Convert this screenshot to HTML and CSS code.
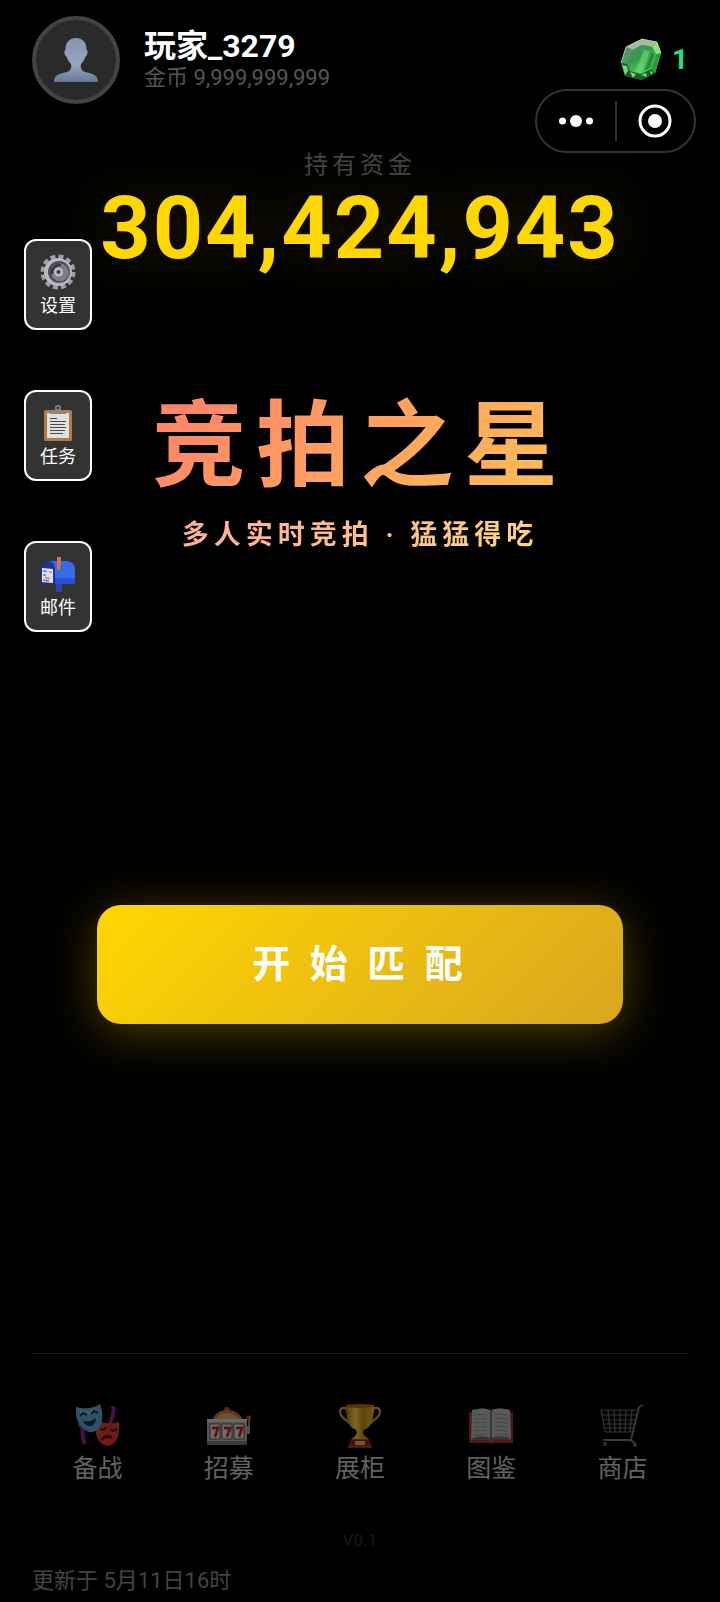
FILE: index.html
```html
<!DOCTYPE html>
<html lang="zh-CN">
<head>
<meta charset="utf-8">
<meta name="viewport" content="width=device-width, initial-scale=1">
<title>竞拍之星</title>
<link rel="stylesheet" href="styles.css">
</head>
<body>
<div class="page">
  <header class="header">
    <div class="avatar">
      <svg class="avatar-icon" viewBox="0 0 44 44" aria-hidden="true">
        <defs><linearGradient id="bust" x1="0" y1="0" x2="0" y2="1"><stop offset="0" stop-color="#8796ae"/><stop offset=".6" stop-color="#97a5bd"/><stop offset="1" stop-color="#66779a"/></linearGradient></defs>
        <path fill="url(#bust)" d="M22 0c-7 0-11 5-10.500 12-1.800.3-1.300 5.500 1 6.500 1 3.500 2.500 5.500 4.500 7.500 1 5-1 7.500-6 8.500C4 36 0 37.500 0 44h44c0-6.500-4-8-11-9.500-5-1-7-3.500-6-8.500 2-2 3.500-4 4.500-7.500 2.300-1 2.800-6.200 1-6.500C33 5 29 0 22 0z"/>
      </svg>
    </div>
    <div class="player">
      <h2 class="player-name">玩家_3279</h2>
      <p class="player-coins">金币 9,999,999,999</p>
    </div>
    <div class="gems">
      <svg class="gem-icon" viewBox="0 0 44 44" aria-hidden="true">
        <defs><linearGradient id="gem" x1="0" y1="0" x2=".6" y2="1"><stop offset="0" stop-color="#6f7f78"/><stop offset=".45" stop-color="#2f9c4c"/><stop offset="1" stop-color="#4fd45a"/></linearGradient></defs>
        <path fill="#238a3a" d="M6 9 22 1l15 3 4 11-6 20-13 7-17-4-4-13z"/>
        <path fill="#a3bd9c" d="M6 9 22 1l15 3-5 5-10-2-9 5z"/>
        <path fill="#4f9a5e" d="m6 9 7 3-6 14-6-1z"/>
        <path fill="#8fe27c" d="m37 4 4 11-6 20-4-4 5-15-4-7z"/>
        <path fill="#2f9a3c" d="m41 15-5 1-5 15 4 4z"/>
        <path fill="#125f27" d="m7 26 3 7 11 3 10-5 4 4-13 7-17-4-4-13z"/>
        <path fill="url(#gem)" d="m13 12 9-5 10 2 4 7-5 15-10 5-11-3-3-7z"/>
        <path fill="#7ddf85" d="m24 12 6 1-9 22-6-1z" opacity=".5"/>
        <path fill="#12682a" d="m32 14 2 4-4 12-6 3z" opacity=".6"/>
        <path fill="#9ff093" d="m2 27 5 1 1 5-3 4zm8 7 6 2-3 4zm11 3 5-2 1 4zm9-4 3 1-2 3z" opacity=".8"/>
        <path fill="none" stroke="#d7dcc9" d="M6 9 22 1l15 3 4 11M6 9 1 25" opacity=".7"/>
      </svg>
      <span class="gem-count">1</span>
    </div>
  </header>

  <div class="capsule">
    <button class="capsule-btn" type="button" aria-label="更多">
      <svg width="34" height="12" viewBox="0 0 34 12"><circle cx="3.500" cy="6" r="3.500"/><circle cx="17" cy="6" r="6"/><circle cx="30.500" cy="6" r="3.500"/></svg>
    </button>
    <span class="capsule-line"></span>
    <button class="capsule-btn" type="button" aria-label="关闭">
      <svg width="34" height="34" viewBox="0 0 34 34"><circle class="ring" cx="17" cy="17" r="15"/><circle cx="17" cy="17" r="7"/></svg>
    </button>
  </div>

  <aside class="side">
    <button class="side-btn" type="button">
      <svg class="side-icon" viewBox="0 0 36 36" aria-hidden="true">
        <circle cx="18" cy="18" r="15" fill="none" stroke="#a09fa7" stroke-width="5" stroke-dasharray="4.800 3.054"/>
        <circle cx="18" cy="18" r="14" fill="#b9b8bf"/>
        <circle cx="19" cy="18" r="11" fill="#4b4c56"/>
        <circle cx="20" cy="18.500" r="9" fill="#7b7d89"/>
        <path d="M12 20a8 8 0 0 1 9-9" fill="none" stroke="#353640" stroke-width="2.500"/>
        <circle cx="18.500" cy="18" r="4.500" fill="#bcbcc5"/>
        <circle cx="18.500" cy="18" r="2" fill="#393a44"/>
      </svg>
      <span>设置</span>
    </button>
    <button class="side-btn" type="button">
      <svg class="side-icon" viewBox="0 0 36 36" aria-hidden="true">
        <rect x="4" y="5" width="28" height="31" rx="1.500" fill="#b47a48"/>
        <path fill="#e2e0df" d="M7 8h22v25H7z"/>
        <circle cx="18" cy="3" r="2.200" fill="none" stroke="#8c8c8c" stroke-width="1.500"/>
        <path fill="#8a8783" d="M14 5h8l4 2v2H10V7z"/>
        <path stroke="#4b4b50" stroke-width="1.200" d="M10 13.500h7M10 16.500h16M10 19.500h15M10 22.500h16M10 25.500h15M10 28.500h13"/>
      </svg>
      <span>任务</span>
    </button>
    <button class="side-btn" type="button">
      <svg class="side-icon" viewBox="0 0 36 36" aria-hidden="true">
        <path fill="#2745b5" d="M16 26h6v10h-6z"/>
        <path fill="#376be8" d="M9 5h18c5 0 8 4 8 9v12c0 1-1 2-2 2H14z"/>
        <path fill="#294fd0" d="M14 22h21v4c0 1-1 2-2 2H14z"/>
        <path fill="#1c358f" d="M1 27V13c0-5 3-8 7-8s7 3 7 8v15z"/>
        <path fill="#dde1f3" d="m2 12 11 1v14L2 26z"/>
        <path stroke="#5a76d8" stroke-width="1.500" d="m3 15 4 .5M3 19l3 .5M3 24l6 1"/>
        <path stroke="#e88a6c" stroke-width="2" d="m9 16 3 .5M5 21.500l5 1"/>
        <path fill="#d8704f" d="M17 1h4v3l-1 10h-3z"/>
      </svg>
      <span>邮件</span>
    </button>
  </aside>

  <section class="funds">
    <p class="funds-label">持有资金</p>
    <p class="funds-amount">304,424,943</p>
  </section>

  <section class="brand">
    <h1 class="brand-title">竞拍之星</h1>
    <p class="brand-sub">多人实时竞拍 · 猛猛得吃</p>
  </section>

  <main class="action">
    <button class="start" type="button">开 始 匹 配</button>
  </main>

  <nav class="nav">
    <button class="nav-item" type="button">
      <svg class="nav-icon" viewBox="0 0 44 44" aria-hidden="true">
        <path d="M37 2c2 7-1 12-3 17M2 20c8 2 2 10 7 20" fill="none" stroke="#8a2490" stroke-width="4"/>
        <path fill="#d83b30" d="M20 16c9 4 15 4 23 2 1 8 0 15-4 20-5 6-12 4-16-1-4-6-4-13-3-21z"/>
        <path fill="#5fa0cc" d="M0 3c8 2 16 2 24-3 3 8 3 17 0 23-3 5-10 7-15 3C1 20-1 12 0 3z"/>
        <path fill="#9cc7df" d="M3 6c6 1 12 1 17-2-3 6-8 8-15 8z" opacity=".5"/>
        <path d="m4 12 3-3 4 2m4-1 3-3 4 2" fill="none" stroke="#12384f" stroke-width="2"/>
        <path fill="#122c40" d="M7 17c5 1 9 0 13-3 0 9-10 11-13 3z"/>
        <path d="m24 25 4 1 2-3m5 2 2 2 4-2" fill="none" stroke="#5a0d10" stroke-width="2"/>
        <path fill="#4c0a0e" d="M25 37c1-7 9-9 12-2-4-2-8-1-12 2z"/>
      </svg>
      <span>备战</span>
    </button>
    <button class="nav-item" type="button">
      <svg class="nav-icon" viewBox="0 0 44 44" aria-hidden="true">
        <circle cx="20" cy="6" r="3" fill="#c83e2e"/>
        <path fill="#bd6f3a" d="M5 16C8 9 13 6 20 6s13 3 16 10z"/>
        <path fill="#dfa057" d="M9 15c3-5 6-6 11-6s8 1 11 6z"/>
        <path fill="#a9a9a9" d="M0 15h40v26H0z"/><path fill="#d0d0d0" d="M0 15h40v3H0z"/><path fill="#777" d="M0 37h40v4H0z"/>
        <path fill="#dcdcdc" stroke="#555" d="M3 20h10v15H3zm12 0h10v15H15zm12 0h10v15H27z"/>
        <path d="M5 24h6l-3 9m9-9h6l-3 9m9-9h6l-3 9" fill="none" stroke="#c4221d" stroke-width="2.800"/>
        <path fill="#999" d="M40 22h3v8h-3z"/><path stroke="#aaa" stroke-width="1.500" d="M42 24V14"/><circle cx="42" cy="14" r="2.500" fill="#d2372e"/>
      </svg>
      <span>招募</span>
    </button>
    <button class="nav-item" type="button">
      <svg class="nav-icon" viewBox="0 0 44 44" aria-hidden="true">
        <defs><linearGradient id="cup"><stop offset="0" stop-color="#ae770d"/><stop offset=".35" stop-color="#f5c957"/><stop offset=".6" stop-color="#bf8613"/><stop offset="1" stop-color="#e5ae35"/></linearGradient></defs>
        <path d="M10 8C8 2 2 3 2 8c0 7 10 8 13 16M34 8c2-6 8-5 8 0 0 7-10 8-13 16" fill="none" stroke="#cf9a34" stroke-width="2.200"/>
        <path fill="url(#cup)" d="M8 1h28c0 13-2 21-10 25-2 3 0 6 5 9H13c5-3 7-6 5-9C10 22 8 14 8 1z"/>
        <ellipse cx="22" cy="2" rx="14" ry="2" fill="#a56d0c"/>
        <path fill="#961f20" d="M13 35h18l3 8H10z"/><path fill="#e3b655" d="M17 37h10v4H17z"/><path stroke="#c08b24" d="M10 43h24M14 35h16"/>
      </svg>
      <span>展柜</span>
    </button>
    <button class="nav-item" type="button">
      <svg class="nav-icon" viewBox="0 0 44 44" aria-hidden="true">
        <path fill="#a72b2c" d="M0 8h44v31H25l-3 1-3-1H0z"/>
        <path fill="#b0b2b2" d="M3 6c8-2 14-2 18 0v28c-6-2-12-2-19 1zm38 0c-8-2-14-2-18 0v28c6-2 12-2 19 1z"/>
        <path fill="#6b6d6e" d="M21 6h2v31h-2zM2 35c7-3 13-3 19 0v2c-6-2-12-2-19 0zm40 0c-7-3-13-3-19 0v2c6-2 12-2 19 0z"/>
        <path d="M5 11l13-1M5 15l13-1M5 19l13-1M5 23l13-1M5 27l13-1M4 31l14-1M26 10l13 1M26 14l13 1M26 18l13 1M26 22l13 1M26 26l13 1M26 30l14 1" stroke="#898b8c"/>
      </svg>
      <span>图鉴</span>
    </button>
    <button class="nav-item" type="button">
      <svg class="nav-icon" viewBox="0 0 44 44" aria-hidden="true">
        <path d="M1 6h37M2 11h34M3 16h32M3 20h31M4 24h29M5 28h27M1 6l4 22M8 6l2 22M14 6l1 22M20 6v22M26 6l-1 22M32 6l-2 22" fill="none" stroke="#6c6c6c" stroke-width="1.200"/>
        <path d="M43 1l-4 2-8 33H3M31 36l4 4" fill="none" stroke="#787878" stroke-width="1.800"/>
        <circle cx="5" cy="40" r="2" fill="#666"/><circle cx="35" cy="41" r="2" fill="#666"/>
      </svg>
      <span>商店</span>
    </button>
  </nav>

  <footer class="footer">
    <p class="version">V0.1</p>
    <p class="updated">更新于 5月11日16时</p>
  </footer>
</div>
</body>
</html>
```
FILE: styles.css
```css
* { box-sizing: border-box; }

body {
  margin: 0;
  background: #000;
  color: #fff;
  font-family: Roboto, "Noto Sans CJK SC", sans-serif;
}

h1, h2, p { margin: 0; }

button {
  margin: 0;
  padding: 0;
  border: 0;
  background: none;
  color: inherit;
  font: inherit;
  cursor: pointer;
}

svg { display: block; }

.page {
  position: relative;
  display: flex;
  flex-direction: column;
  min-height: 100vh;
}

.header {
  display: flex;
  align-items: center;
  padding: 16px 32px 0;
}

.avatar {
  display: flex;
  align-items: center;
  justify-content: center;
  width: 88px;
  height: 88px;
  border: 4px solid #444;
  border-radius: 50%;
  background: #2a2a2a;
}

.avatar-icon { width: 44px; height: 44px; }

.player {
  flex: 1;
  margin-left: 24px;
}

.player-name {
  font-size: 32px;
  line-height: 36px;
  font-weight: 700;
}

.player-coins {
  color: #555;
  font-size: 22px;
  line-height: 28px;
}

.gems {
  display: flex;
  align-items: center;
  gap: 8px;
}

.gem-icon { width: 44px; height: 44px; }

.gem-count {
  color: #1ee283;
  font-size: 28px;
  line-height: 32px;
  font-weight: 700;
}

.capsule {
  position: absolute;
  top: 89px;
  right: 24px;
  display: flex;
  align-items: center;
  width: 161px;
  height: 64px;
  border: 2px solid #333;
  border-radius: 32px;
}

.capsule-btn {
  display: flex;
  flex: 1;
  align-items: center;
  justify-content: center;
  height: 100%;
  fill: #fff;
}

.capsule-line {
  width: 2px;
  height: 40px;
  background: #333;
}

.ring {
  fill: none;
  stroke: #fff;
  stroke-width: 3;
}

.side {
  position: absolute;
  top: 239px;
  left: 24px;
  display: flex;
  flex-direction: column;
  gap: 60px;
}

.side-btn {
  display: flex;
  flex-direction: column;
  align-items: center;
  gap: 2px;
  width: 68px;
  height: 91px;
  padding-top: 13px;
  border: 2px solid #fff;
  border-radius: 12px;
  background: #333;
  font-size: 18px;
  line-height: 28px;
}

.side-icon { width: 36px; height: 36px; }

.funds {
  margin-top: 47px;
  text-align: center;
}

.funds-label {
  color: #444;
  font-size: 24px;
  line-height: 28px;
  letter-spacing: 4px;
}

.funds-amount {
  color: #ffd700;
  font-size: 88px;
  line-height: 98px;
  font-weight: 700;
  letter-spacing: 2px;
  text-shadow: 0 0 64px rgba(255, 215, 0, 0.2);
}

.brand {
  display: flex;
  flex-direction: column;
  align-items: center;
  gap: 16px;
  margin-top: 116px;
}

.brand-title,
.brand-sub {
  -webkit-background-clip: text;
  background-clip: text;
  color: transparent;
  font-weight: 700;
}

.brand-title {
  background-image: linear-gradient(135deg, #ff8068, #ffc157);
  font-size: 94px;
  line-height: 108px;
  letter-spacing: 10px;
}

.brand-sub {
  background-image: linear-gradient(135deg, #ffab99, #ffd280);
  font-size: 27px;
  line-height: 36px;
  letter-spacing: 5px;
}

.action {
  display: flex;
  flex: 1;
  align-items: center;
  justify-content: center;
  padding-top: 22px;
}

.start {
  width: 73%;
  padding: 33px 0 34px;
  border-radius: 24px;
  background: linear-gradient(135deg, #ffd700, #daa520);
  box-shadow: 0 8px 48px rgba(255, 215, 0, 0.3);
  font-size: 38px;
  line-height: 52px;
  font-weight: 700;
  letter-spacing: 5px;
}

.nav {
  display: grid;
  grid-template-columns: repeat(5, 1fr);
  margin: 0 32px;
  padding-top: 50px;
  border-top: 1px solid #181818;
}

.nav-item {
  display: flex;
  flex-direction: column;
  align-items: center;
  gap: 5px;
  color: #626262;
  font-size: 25px;
  line-height: 32px;
}

.nav-icon {
  width: 44px;
  height: 44px;
  opacity: 0.5;
}

.footer { padding: 43px 32px 7px; }

.version {
  color: #191919;
  font-size: 17px;
  line-height: 24px;
  text-align: center;
}

.updated {
  margin-top: 15px;
  color: #444;
  font-size: 22px;
  line-height: 28px;
}
```
